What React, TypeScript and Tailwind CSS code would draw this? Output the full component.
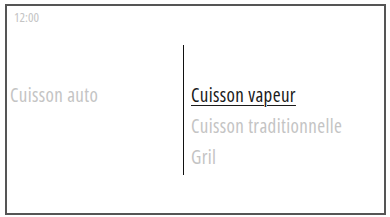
export default function App() {
  return (
    <div className="w-[390px] h-[217px] bg-white pt-[4px] pl-[5px]" style={{ fontFamily: '"Open Sans", Roboto, sans-serif' }}>
      <div className="w-[381px] h-[211px] border-2 border-[#555] flex flex-col font-stretch-[75%]">
        <div className="pl-[7px] pt-[4px] h-[39px] text-[13px] leading-[14px] text-[#c4c4c4]">12:00</div>
        <div className="flex h-[130px]">
          <div className="w-[176px] pl-[3px] pt-[38px] text-[19px] leading-[24px] tracking-[0.02em] text-[#c4c4c4]">
            Cuisson auto
          </div>
          <div className="w-[1px] h-full bg-[#111]" />
          <div className="pl-[7px] pt-[38px] flex flex-col gap-[7px] text-[19px] leading-[24px] tracking-[0.02em]">
            <span className="text-[#1a1a1a] underline underline-offset-[3px] decoration-[1px]">Cuisson vapeur</span>
            <span className="text-[#c4c4c4]">Cuisson traditionnelle</span>
            <span className="text-[#c4c4c4]">Gril</span>
          </div>
        </div>
      </div>
    </div>
  );
}
